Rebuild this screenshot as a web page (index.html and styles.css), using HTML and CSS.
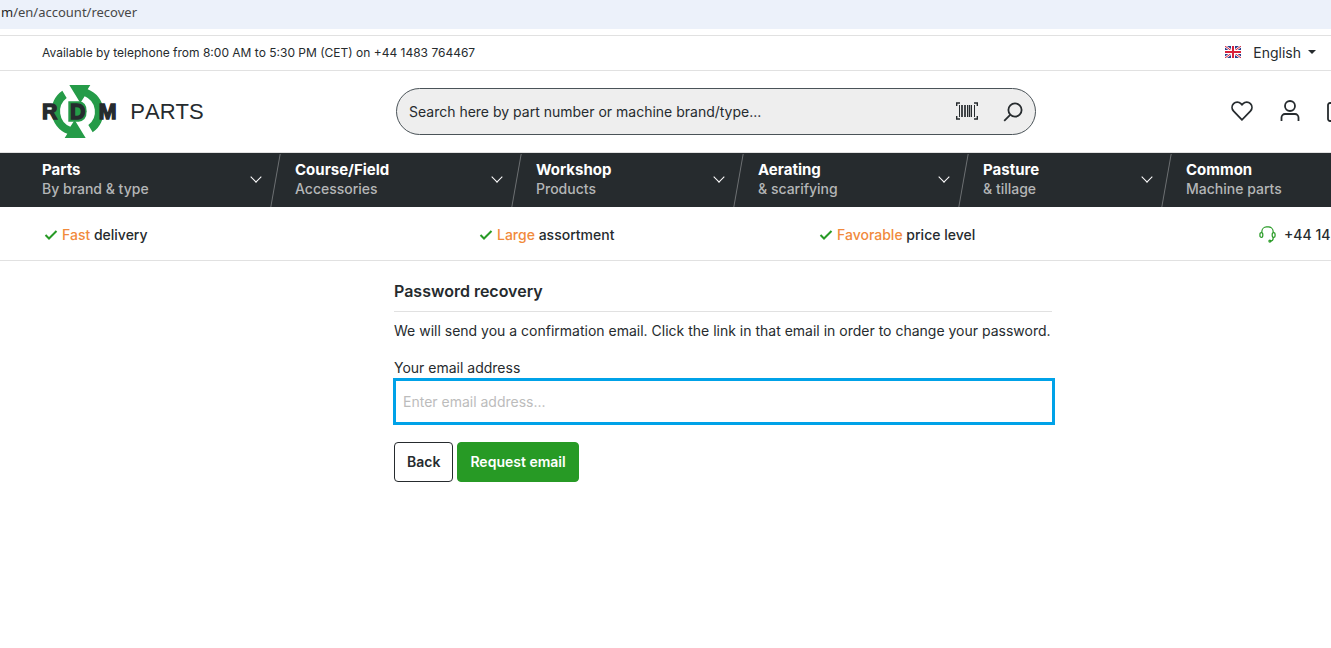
FILE: index.html
```
<!DOCTYPE html>
<html lang="en">
<head>
  <meta charset="UTF-8">
  <meta name="viewport" content="width=device-width, initial-scale=1.0">
  <title>Password recovery - RDM Parts</title>
  <link rel="stylesheet" href="styles.css">
</head>
<body>
  <div class="address-bar"><span class="domain">m</span>/en/account/recover</div>

  <div class="top-bar">
    <p class="phone-note">Available by telephone from 8:00 AM to 5:30 PM (CET) on +44 1483 764467</p>
    <button class="language" type="button">
      <svg class="flag" viewBox="0 0 16 12" aria-hidden="true">
        <rect width="16" height="12" fill="#2b3f8c"/>
        <path d="M0 0L16 12M16 0L0 12" stroke="#fff" stroke-width="2.4"/>
        <path d="M0 0L16 12M16 0L0 12" stroke="#d8203a" stroke-width="1"/>
        <path d="M8 0V12M0 6H16" stroke="#fff" stroke-width="4"/>
        <path d="M8 0V12M0 6H16" stroke="#d8203a" stroke-width="2"/>
      </svg>
      English
      <span class="caret"></span>
    </button>
  </div>

  <header class="header">
    <a class="logo" href="#" aria-label="RDM Parts">
      <svg viewBox="36 27 492 165">
        <g fill="#259b48">
          <path id="arrow" d="M118 30H181L173 43A73 73 0 0 1 188 172L175 150A50 50 0 0 0 164 64L151 84Z"/>
          <use href="#arrow" transform="rotate(180 142.5 109.5)"/>
          <path d="M115 79H146Q170 80 170 109Q170 138 146 140H115Z"/>
        </g>
        <g class="logo-bold">
          <text x="36" y="132">R</text>
          <text x="120" y="132">D</text>
          <text x="206" y="132">M</text>
        </g>
        <text class="logo-light" x="301" y="132">PARTS</text>
      </svg>
    </a>
    <form class="search">
      <input type="search" aria-label="Search" placeholder="Search here by part number or machine brand/type...">
      <button type="button" aria-label="Scan barcode">
        <svg class="icon-barcode" viewBox="0 0 22 18">
          <path d="M.7 4V1H4M18 1H21.300V4M21.300 14V17H18M4 17H.7V14" fill="none" stroke="#262b2e" stroke-width="1.4"/>
          <path d="M3.500 3V15M11.500 3V15M15.500 3V15M18.500 3V15" stroke="#262b2e" stroke-width="1"/>
          <path d="M6 3V15M9 3V15M13.500 3V15" stroke="#262b2e" stroke-width="1.7"/>
        </svg>
      </button>
      <button type="submit" aria-label="Search">
        <svg class="icon-search" viewBox="0 0 20 20" fill="none" stroke="#262b2e" stroke-width="1.8">
          <circle cx="12" cy="8" r="6.6"/>
          <path d="M7.2 12.8L1.2 18.8"/>
        </svg>
      </button>
    </form>
    <div class="actions">
      <a href="#" aria-label="Wishlist">
        <svg viewBox="0 0 24 24"><path d="M12 20.8L3.6 12.1A5.3 5.3 0 0 1 3.6 4.7A5.1 5.1 0 0 1 10.9 4.7L12 5.8L13.1 4.7A5.1 5.1 0 0 1 20.4 4.7A5.3 5.3 0 0 1 20.4 12.1Z"/></svg>
      </a>
      <a href="#" aria-label="Account">
        <svg viewBox="0 0 24 24"><circle cx="12" cy="7" r="5"/><path d="M3.5 22V18.5A3.5 3.5 0 0 1 7 15H17A3.5 3.5 0 0 1 20.5 18.5V22"/></svg>
      </a>
      <a href="#" aria-label="Cart">
        <svg viewBox="0 0 24 24"><rect x="2" y="4" width="20" height="18" rx="2"/><path d="M8 8V5A4 4 0 0 1 16 5V8"/></svg>
      </a>
    </div>
  </header>

  <nav class="main-nav">
    <a href="#"><span><strong>Parts</strong>By brand &amp; type</span><i class="chevron"></i></a>
    <a href="#"><span><strong>Course/Field</strong>Accessories</span><i class="chevron"></i></a>
    <a href="#"><span><strong>Workshop</strong>Products</span><i class="chevron"></i></a>
    <a href="#"><span><strong>Aerating</strong>&amp; scarifying</span><i class="chevron"></i></a>
    <a href="#"><span><strong>Pasture</strong>&amp; tillage</span><i class="chevron"></i></a>
    <a href="#"><span><strong>Common</strong>Machine parts</span></a>
  </nav>

  <ul class="usps">
    <li><svg class="check" viewBox="0 0 14 10"><path d="M1.5 5L5 8.5L12.5 1"/></svg><span><em>Fast</em> delivery</span></li>
    <li><svg class="check" viewBox="0 0 14 10"><path d="M1.5 5L5 8.5L12.5 1"/></svg><span><em>Large</em> assortment</span></li>
    <li><svg class="check" viewBox="0 0 14 10"><path d="M1.5 5L5 8.5L12.5 1"/></svg><span><em>Favorable</em> price level</span></li>
    <li>
      <a class="phone" href="tel:+441483764467">
        <svg viewBox="0 0 18 18"><path d="M3 7V6A5 5 0 0 1 8 1H10A5 5 0 0 1 15 6V7M15 12V13A3 3 0 0 1 12 16"/><rect x="1" y="7" width="3" height="5" rx="1.5"/><rect x="14" y="7" width="3" height="5" rx="1.5"/><circle cx="11.5" cy="16" r="1"/></svg>
        +44 14
      </a>
    </li>
  </ul>

  <main class="recover">
    <h1>Password recovery</h1>
    <p>We will send you a confirmation email. Click the link in that email in order to change your password.</p>
    <form>
      <label for="email">Your email address</label>
      <input type="email" id="email" placeholder="Enter email address...">
      <div class="buttons">
        <button class="btn" type="button">Back</button>
        <button class="btn btn-primary" type="submit">Request email</button>
      </div>
    </form>
  </main>
</body>
</html>
```
FILE: styles.css
```
* {
  box-sizing: border-box;
}
body {
  margin: 0;
  font-family: Inter, sans-serif;
  font-size: 14px;
  line-height: 20px;
  color: #262b2e;
  background-color: #fff;
  overflow-x: hidden;
}
button, input {
  font: inherit;
  color: inherit;
}
button {
  cursor: pointer;
}
a {
  color: inherit;
  text-decoration: none;
}

/* Address bar */
.address-bar {
  height: 29px;
  padding: 2px 1px;
  background-color: #ecf1fa;
  font-family: "Noto Sans", "Open Sans", sans-serif;
  font-size: 13px;
  line-height: 21px;
  color: #474747;
}
.domain {
  color: #1f1f1f;
}

/* Top bar */
.top-bar {
  display: flex;
  justify-content: space-between;
  align-items: center;
  height: 36px;
  margin-top: 6px;
  padding: 0 15px 0 42px;
  border-top: 1px solid #e1e1e1;
  border-bottom: 1px solid #e1e1e1;
}
.phone-note {
  margin: 0;
  font-size: 12px;
}
.language {
  display: flex;
  align-items: center;
  padding: 0;
  border: none;
  background: none;
}
.flag {
  width: 16px;
  height: 12px;
  margin: 0 12px 2px 0;
}
.caret {
  margin: 0 0 2px 7px;
  border: 4px solid transparent;
  border-top-color: #262b2e;
  border-bottom: none;
}

/* Header */
.header {
  display: flex;
  align-items: center;
  height: 82px;
  padding-left: 42px;
  border-bottom: 1px solid #e1e1e1;
}
.logo {
  width: 354px;
}
.logo svg {
  display: block;
  width: 164px;
  height: 55px;
}
.logo text {
  font-family: "Liberation Sans", Arial, sans-serif;
  font-size: 64px;
  fill: #262b2e;
}
.logo .logo-light {
  font-size: 66px;
  font-kerning: none;
}
.logo-bold text {
  font-weight: bold;
  stroke: #262b2e;
  stroke-width: 4px;
}
.search {
  display: flex;
  align-items: center;
  width: 640px;
  height: 47px;
  padding: 0 12px;
  border: 1px solid #4a5358;
  border-radius: 24px;
  background-color: #eee;
}
.search input {
  flex: 1;
  padding: 0;
  border: none;
  outline: none;
  background: none;
}
.search input::placeholder {
  color: #262b2e;
  opacity: 1;
}
.search button {
  display: flex;
  justify-content: center;
  width: 44px;
  padding: 0 0 2px;
  border: none;
  background: none;
}
.search button:last-child {
  width: 20px;
  padding: 0;
  margin-left: 14px;
}
.icon-barcode {
  width: 22px;
  height: 18px;
}
.icon-search {
  width: 20px;
  height: 20px;
}
.actions {
  display: flex;
  gap: 24px;
  margin-left: auto;
  margin-right: -19px;
  padding-bottom: 2px;
}
.actions svg {
  display: block;
  width: 24px;
  height: 24px;
  fill: none;
  stroke: #262b2e;
  stroke-width: 1.8;
}

/* Main navigation */
.main-nav {
  display: grid;
  grid-template-columns: 276fr 241fr 222fr 225fr 203fr 164fr;
  height: 54px;
  overflow: hidden;
  background-color: #262b2e;
}
.main-nav a {
  position: relative;
  display: flex;
  justify-content: space-between;
  align-items: center;
  padding: 0 16px 2px 19px;
  font-weight: 500;
  line-height: 19px;
  color: #b4b6b7;
  white-space: nowrap;
}
.main-nav a:first-child {
  padding-left: 42px;
}
.main-nav a:not(:last-child)::after {
  content: "";
  position: absolute;
  top: 1px;
  bottom: 0;
  right: 0;
  width: 1px;
  background-color: #6c7072;
  transform: skewX(-10deg);
}
.main-nav strong {
  display: block;
  font-size: 15px;
  font-weight: 700;
  color: #fff;
}
.chevron {
  width: 8px;
  height: 8px;
  margin-bottom: 4px;
  border: solid #fff;
  border-width: 0 1px 1px 0;
  transform: rotate(45deg);
}

/* Selling points */
.usps {
  display: grid;
  grid-template-columns: 435fr 340fr 440fr 72fr;
  align-items: center;
  height: 54px;
  margin: 0;
  padding: 2px 0 0 44px;
  border-bottom: 1px solid #e1e1e1;
  list-style: none;
  font-weight: 500;
}
.usps li {
  display: flex;
  align-items: center;
  min-width: 0;
  white-space: nowrap;
}
.usps em {
  font-style: normal;
  color: #f18a3c;
}
.check {
  width: 14px;
  height: 10px;
  margin-right: 4px;
  fill: none;
  stroke: #279a25;
  stroke-width: 2;
}
.phone {
  display: flex;
  align-items: center;
  gap: 8px;
}
.phone svg {
  width: 17px;
  height: 17px;
  fill: none;
  stroke: #279a25;
  stroke-width: 1.3;
}

/* Password recovery */
.recover {
  width: 50%;
  max-width: 658px;
  margin: 20px 0 0 394px;
}
.recover h1 {
  margin: 0 0 9px;
  padding-bottom: 10px;
  border-bottom: 1px solid #e1e1e1;
  font-size: 16px;
  font-weight: 600;
}
.recover p {
  margin: 0 0 17px;
  white-space: nowrap;
}
.recover label {
  display: block;
}
.recover input {
  display: block;
  width: calc(100% + 4px);
  height: 47px;
  margin-left: -1px;
  padding: 0 7px;
  border: 3px solid #00a2e8;
  outline: none;
}
.recover input::placeholder {
  color: #bcbcbc;
  opacity: 1;
}
.buttons {
  display: flex;
  gap: 4px;
  margin-top: 17px;
}
.btn {
  height: 40px;
  padding: 0 12px;
  border: 1px solid #262b2e;
  border-radius: 4px;
  background-color: #fff;
  font-weight: 600;
}
.btn-primary {
  border-color: #279a25;
  background-color: #279a25;
  color: #fff;
}
```
